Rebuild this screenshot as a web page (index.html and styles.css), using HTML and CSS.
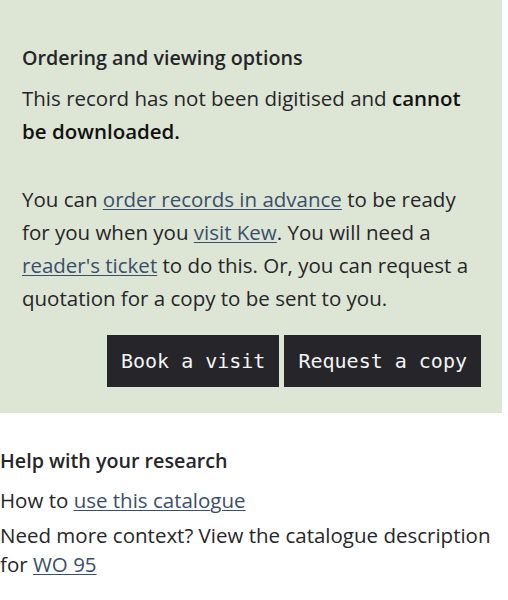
FILE: index.html
```html
<!DOCTYPE html>
<html lang="en">
<head>
<meta charset="utf-8">
<title>Ordering and viewing options</title>
<link rel="stylesheet" href="styles.css">
</head>
<body>
<section class="panel">
  <h2 class="panel-title">Ordering and viewing options</h2>
  <p class="text first">This record has not been digitised and <strong>cannot be downloaded.</strong></p>
  <p class="text second">You can <a href="#">order records in advance</a> to be ready for you when you <a href="#">visit Kew</a>. You will need a <a href="#">reader's ticket</a> to do this. Or, you can request a quotation for a copy to be sent to you.</p>
  <div class="actions">
    <a class="btn" href="#">Book a visit</a>
    <a class="btn" href="#">Request a copy</a>
  </div>
</section>
<section class="help">
  <h2 class="help-title">Help with your research</h2>
  <p class="help-line">How to <a href="#">use this catalogue</a></p>
  <p class="help-line last">Need more context? View the catalogue description for <a href="#">WO 95</a></p>
</section>
</body>
</html>
```
FILE: styles.css
```css
html, body {
  margin: 0;
  padding: 0;
  background: #ffffff;
}
body {
  font-family: "Open Sans", "Liberation Sans", sans-serif;
  font-size: 20.5px;
  color: #26262a;
}
a {
  color: #3a4f6b;
  text-decoration: underline;
  text-underline-offset: 2px;
  text-decoration-thickness: 1px;
}
.panel {
  width: 502px;
  box-sizing: border-box;
  background: #dde5d5;
  padding: 41px 21px 26px 22px;
}
.panel-title {
  margin: 0 0 8px;
  font-size: 19.7px;
  font-weight: 600;
  line-height: 33px;
}
.text {
  margin: 0;
  line-height: 33px;
}
.text strong {
  font-weight: 600;
  color: #111;
}
.text.second {
  margin-top: 35px;
}
.actions {
  display: flex;
  justify-content: flex-end;
  gap: 5px;
  margin-top: 20px;
}
.btn {
  display: flex;
  align-items: center;
  height: 52px;
  padding: 0 14px;
  background: #26262a;
  color: #f4f4f4;
  text-decoration: none;
  font-family: "DejaVu Sans Mono", "Liberation Mono", monospace;
  font-size: 20px;
}
.help {
  padding: 33px 0 0 0;
}
.help-title {
  margin: 0 0 11px;
  font-size: 19.7px;
  font-weight: 600;
  line-height: 29px;
}
.help-line {
  margin: 0 0 6px;
  line-height: 29px;
}
```
